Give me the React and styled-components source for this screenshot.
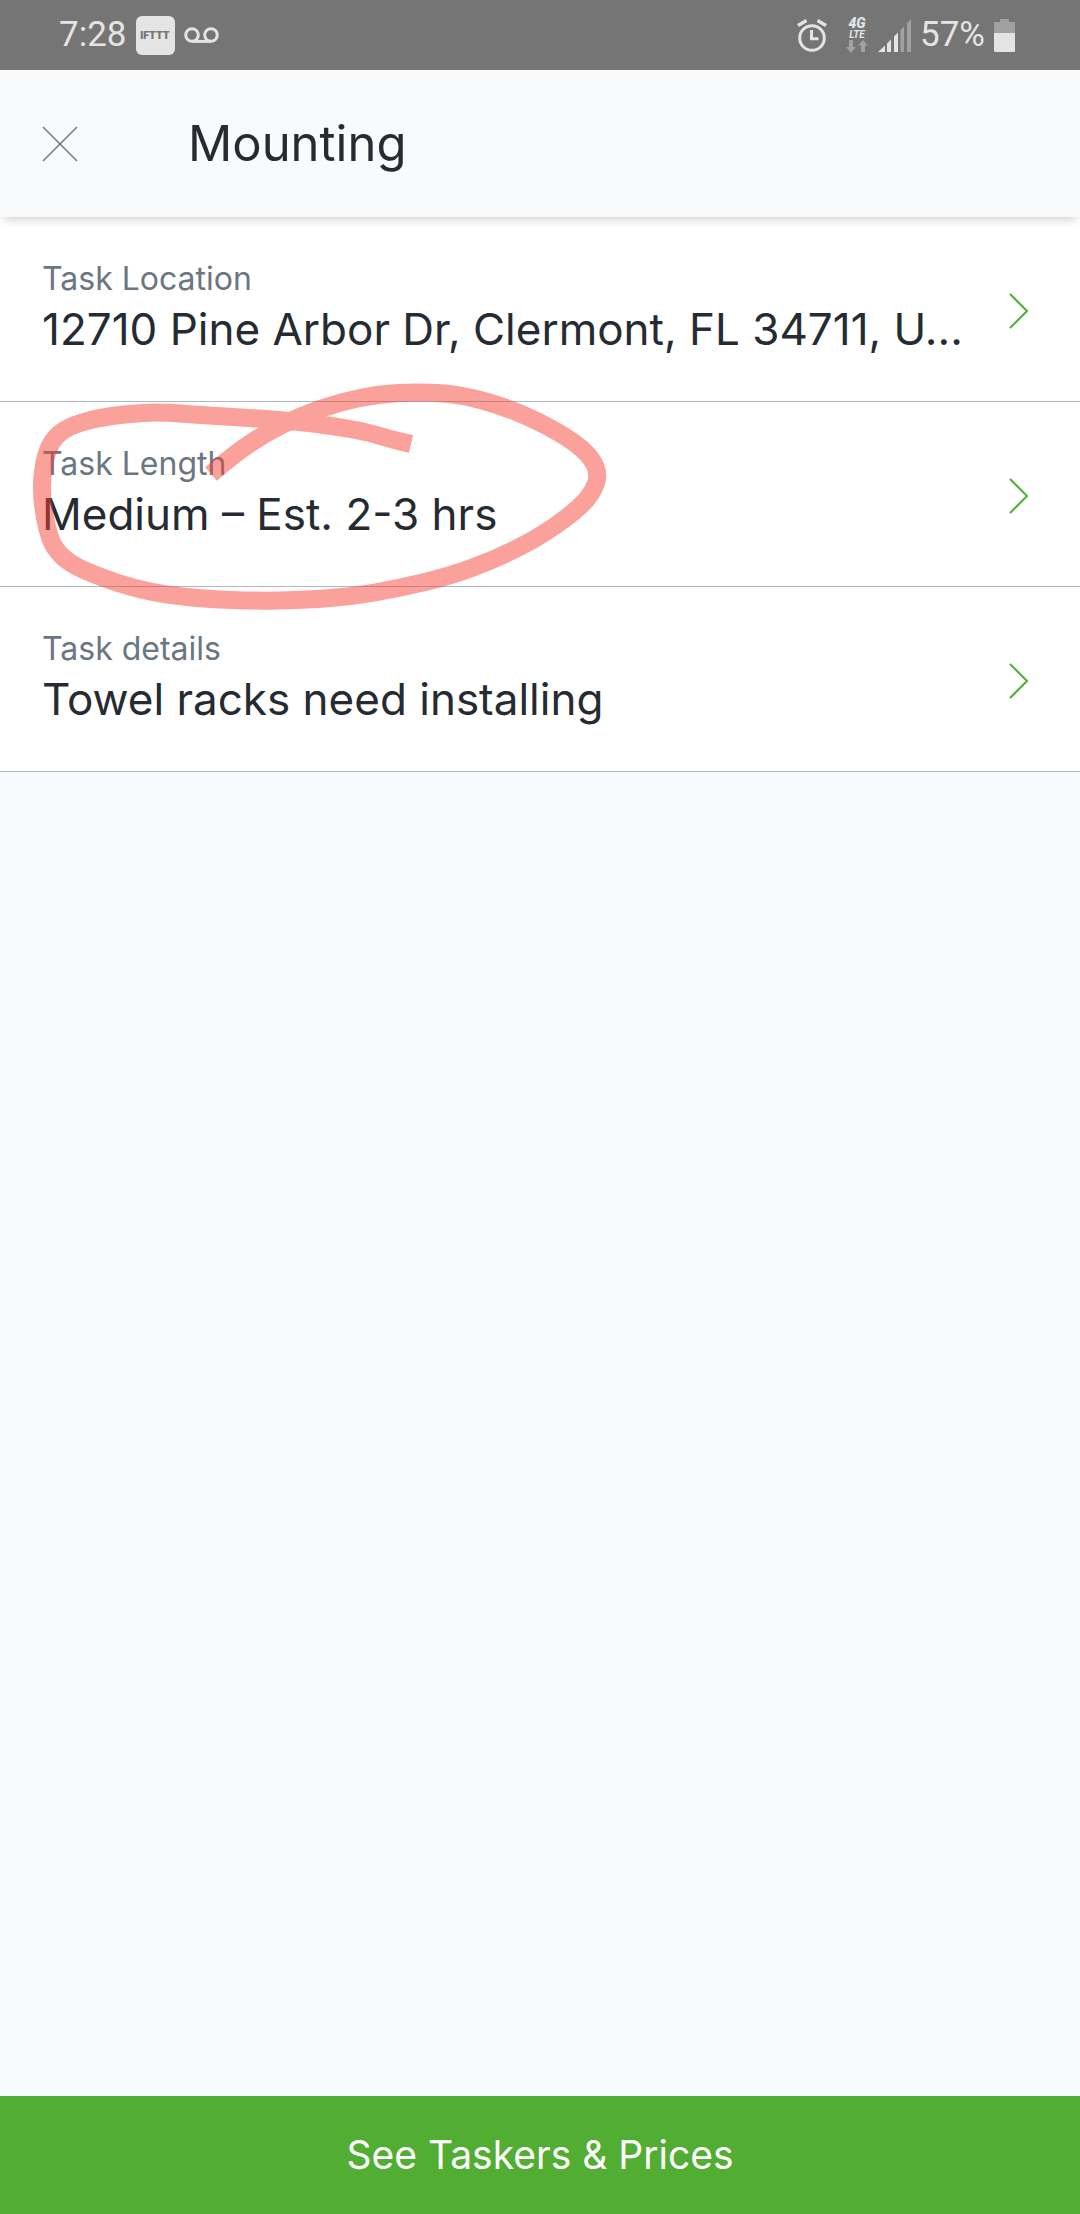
import styled, { createGlobalStyle } from "styled-components";

const GlobalStyle = createGlobalStyle`
  * {
    box-sizing: border-box;
  }

  body {
    margin: 0;
    background-color: #f9fafc;
    color: #262b32;
    font-family: Inter, "Liberation Sans", sans-serif;
  }

  button {
    font-family: inherit;
    border: none;
    cursor: pointer;
  }
`;

const Screen = styled.div`
  min-height: 100vh;
  display: flex;
  flex-direction: column;
`;

const StatusBar = styled.div`
  height: 70px;
  display: flex;
  align-items: center;
  justify-content: space-between;
  padding: 0 65px 0 59px;
  background-color: #757575;
  color: #e4e4e4;
  font-family: Roboto, sans-serif;
  font-size: 35px;
  line-height: 40px;
`;

const StatusGroup = styled.div`
  display: flex;
  align-items: center;
  gap: 9px;
`;

const AppBadge = styled.span`
  width: 39px;
  height: 39px;
  display: flex;
  align-items: center;
  justify-content: center;
  border-radius: 6px;
  background-color: #e4e4e4;
  color: #757575;
  font-family: Inter, sans-serif;
  font-size: 10px;
  font-weight: 900;
  line-height: 12px;
`;

const Network = styled.span`
  width: 24px;
  display: flex;
  flex-direction: column;
  align-items: center;
  margin-left: 9px;
  font-size: 14px;
  font-style: italic;
  font-weight: 900;
  line-height: 13px;

  small {
    font-size: 10px;
    font-weight: 700;
    line-height: 10px;
  }
`;

const Header = styled.header`
  height: 147px;
  display: flex;
  align-items: center;
  gap: 96px;
  padding: 0 28px;
  position: relative;
  z-index: 1;
  background-color: #f9fafc;
  box-shadow: 0 6px 10px -4px rgba(0, 0, 0, 0.2);

  h1 {
    margin: 0;
    font-size: 49px;
    font-weight: 400;
    line-height: 62px;
  }
`;

const CloseButton = styled.button`
  display: flex;
  padding: 14px;
  background: none;
`;

const TaskList = styled.main`
  position: relative;
`;

const TaskRow = styled.button`
  width: 100%;
  display: flex;
  align-items: center;
  justify-content: space-between;
  gap: 32px;
  padding: 0 51px 0 42px;
  border-bottom: 1px solid #b0b6bf;
  background-color: #fff;
  color: inherit;
  text-align: left;
`;

const TaskText = styled.span`
  min-width: 0;
  display: flex;
  flex-direction: column;
  padding: 40px 0 44px;
`;

const TaskLabel = styled.span`
  color: #6b7682;
  font-size: 32px;
  line-height: 44px;
`;

const TaskValue = styled.span`
  overflow: hidden;
  font-size: 44px;
  line-height: 56px;
  text-overflow: ellipsis;
  white-space: nowrap;
`;

const Chevron = styled.svg`
  flex-shrink: 0;
  margin-top: 4px;
`;

const Marker = styled.svg`
  position: absolute;
  top: 0;
  left: 0;
  pointer-events: none;
`;

const PricesButton = styled.button`
  height: 118px;
  margin-top: auto;
  background-color: #52ae32;
  color: #fff;
  font-size: 39px;
  line-height: 48px;
`;

const tasks = [
  {
    label: "Task Location",
    value: "12710 Pine Arbor Dr, Clermont, FL 34711, U...",
  },
  { label: "Task Length", value: "Medium – Est. 2-3 hrs" },
  { label: "Task details", value: "Towel racks need installing" },
];

const markerPoints = [
  [211, 474], [233, 455], [264, 434], [300, 416], [340, 402], [380, 394],
  [417, 392], [457, 394], [500, 405], [540, 422], [573, 441], [591, 457],
  [599, 474], [593, 492], [580, 507], [557, 525], [530, 542], [493, 560],
  [450, 576], [400, 588], [350, 597], [300, 600], [257, 601], [207, 599],
  [167, 595], [133, 588], [100, 577], [72, 565], [55, 550], [47, 530],
  [41, 493], [44, 460], [52, 440], [67, 427], [97, 418], [127, 414],
  [160, 412], [200, 415], [250, 418], [293, 421], [333, 426], [367, 432],
  [390, 439], [411, 444],
];

// Runs a curve through the midpoints so the stroke looks drawn by finger
const smoothPath = (points) => {
  let d = `M${points[0][0]} ${points[0][1]}`;
  for (let i = 1; i < points.length - 1; i++) {
    const [x, y] = points[i];
    const [nx, ny] = points[i + 1];
    d += ` Q${x} ${y} ${(x + nx) / 2} ${(y + ny) / 2}`;
  }
  const [lx, ly] = points[points.length - 1];
  return `${d} L${lx} ${ly}`;
};

const VoicemailIcon = () => (
  <svg width="35" height="16" viewBox="0 0 35 16" fill="none" stroke="#e4e4e4" strokeWidth="3">
    <circle cx="8" cy="8" r="6.3" />
    <circle cx="27" cy="8" r="6.3" />
    <path d="M8 14.4h19" />
  </svg>
);

const AlarmIcon = () => (
  <svg width="30" height="33" viewBox="0 0 30 33" fill="none" stroke="#e4e4e4">
    <circle cx="15" cy="19" r="12.3" strokeWidth="3" />
    <path d="M14.5 11v8.7h7" strokeWidth="3" />
    <path d="M1 6.5 9.5 1.5M29 6.5 20.5 1.5" strokeWidth="3.2" />
  </svg>
);

const DataArrows = () => (
  <svg width="22" height="13" viewBox="0 0 22 13" fill="#a1a1a1">
    <path d="M3 0h4v7h3l-5 6-5-6h3z" />
    <path d="M15 12h4V5.500h3L17 0l-5 5.500h3z" />
  </svg>
);

const SignalIcon = () => (
  <svg width="33" height="33" viewBox="0 0 33 33">
    <path d="M0 33 7 26.500V33zM9 24.500 13 20.500V33H9zM16 17.500 20 13.500V33h-4z" fill="#e4e4e4" />
    <path d="M22.500 11 26 7.500V33h-3.500zM29 4.500 33 0v33h-4z" fill="#a1a1a1" />
  </svg>
);

const BatteryIcon = () => (
  <svg width="21" height="33" viewBox="0 0 21 33">
    <path d="M6 0h9v3h6v11H0V3h6z" fill="#a1a1a1" />
    <path d="M0 14h21v17.500a1.500 1.500 0 0 1-1.500 1.500h-18A1.500 1.500 0 0 1 0 31.500z" fill="#e4e4e4" />
  </svg>
);

export default function App() {
  return (
    <Screen>
      <GlobalStyle />
      <StatusBar>
        <StatusGroup>
          <span>7:28</span>
          <AppBadge>IFTTT</AppBadge>
          <VoicemailIcon />
        </StatusGroup>
        <StatusGroup>
          <AlarmIcon />
          <Network>
            4G
            <small>LTE</small>
            <DataArrows />
          </Network>
          <SignalIcon />
          <span>57%</span>
          <BatteryIcon />
        </StatusGroup>
      </StatusBar>
      <Header>
        <CloseButton aria-label="Close">
          <svg width="36" height="36" viewBox="0 0 36 36" stroke="#757575" strokeWidth="1.5">
            <path d="M1 1 35 35M35 1 1 35" />
          </svg>
        </CloseButton>
        <h1>Mounting</h1>
      </Header>
      <TaskList>
        {tasks.map(({ label, value }) => (
          <TaskRow key={label}>
            <TaskText>
              <TaskLabel>{label}</TaskLabel>
              <TaskValue>{value}</TaskValue>
            </TaskText>
            <Chevron width="20" height="36" viewBox="0 0 20 36" fill="none" stroke="#52ae32" strokeWidth="2">
              <path d="M1 1 18 18 1 35" />
            </Chevron>
          </TaskRow>
        ))}
        <Marker width="640" height="400" viewBox="0 217 640 400" fill="none" stroke="#f44336" strokeWidth="18">
          <path d={smoothPath(markerPoints)} opacity="0.5" />
        </Marker>
      </TaskList>
      <PricesButton>See Taskers &amp; Prices</PricesButton>
    </Screen>
  );
}
